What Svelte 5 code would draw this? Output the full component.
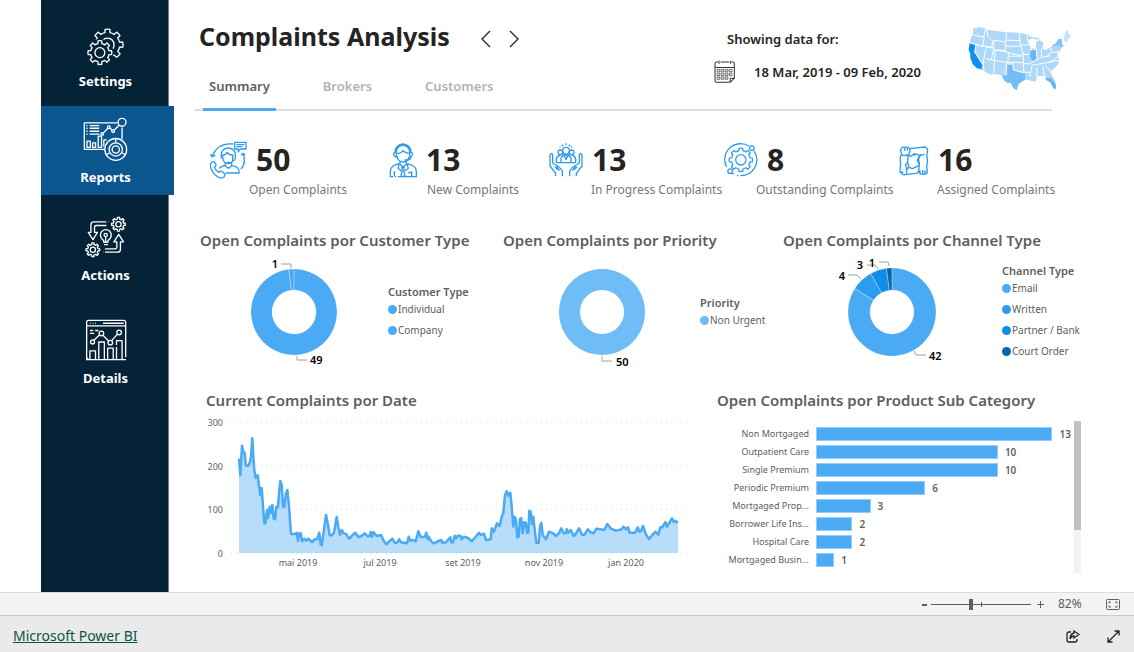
<script>
  const TAU = Math.PI * 2;

  // Outline of a cog wheel with rounded-off rectangular teeth.
  function gear(cx, cy, outer, teeth, depth) {
    const root = outer - depth;
    const step = TAU / teeth;
    const at = (r, a) => `${(cx + r * Math.sin(a)).toFixed(1)},${(cy - r * Math.cos(a)).toFixed(1)}`;
    let d = '';
    for (let i = 0; i < teeth; i++) {
      const a = i * step;
      d += `${i ? 'L' : 'M'}${at(root, a - step * 0.27)}`;
      d += `L${at(outer, a - step * 0.2)}A${outer} ${outer} 0 0 1 ${at(outer, a + step * 0.2)}`;
      d += `L${at(root, a + step * 0.27)}A${root} ${root} 0 0 1 ${at(root, a + step * 0.73)}`;
    }
    return d + 'Z';
  }

  function ringSlice(cx, cy, r, inner, from, to) {
    const a = from * TAU;
    const b = to * TAU;
    const big = to - from > 0.5 ? 1 : 0;
    const at = (rad, t) => `${cx + rad * Math.sin(t)} ${cy - rad * Math.cos(t)}`;
    return `M${at(r, a)}A${r} ${r} 0 ${big} 1 ${at(r, b)}L${at(inner, b)}A${inner} ${inner} 0 ${big} 0 ${at(inner, a)}Z`;
  }

  const nav = [
    { id: 'settings', label: 'Settings', box: '139 82 112 114', w: 37, h: 38 },
    { id: 'reports', label: 'Reports', box: '128 348 136 136', w: 45, h: 45 },
    { id: 'actions', label: 'Actions', box: '130 62 126 128', w: 42, h: 42 },
    { id: 'details', label: 'Details', box: '124 370 126 128', w: 42, h: 42 }
  ];
  let page = $state('reports');

  const tabs = ['Summary', 'Brokers', 'Customers'];
  let tab = $state('Summary');

  const kpis = [
    { id: 'open', value: 50, label: 'Open Complaints', box: '38 34 114 114', w: 38, h: 38 },
    { id: 'new', value: 13, label: 'New Complaints', box: '580 40 84 108', w: 28, h: 36 },
    { id: 'progress', value: 13, label: 'In Progress Complaints', box: '28 38 102 102', w: 34, h: 34 },
    { id: 'outstanding', value: 8, label: 'Outstanding Complaints', box: '28 36 105 105', w: 34, h: 34 },
    { id: 'assigned', value: 16, label: 'Assigned Complaints', box: '554 42 90 93', w: 30, h: 31 }
  ];

  const donuts = [
    {
      id: 'customer', title: 'Open Complaints por Customer Type', legend: 'Customer Type', r: 43,
      parts: [
        { name: 'Individual', value: 49, color: '#4aabf4' },
        { name: 'Company', value: 1, color: '#4aabf4' }
      ],
      leaders: ['M47 7h10v4', 'M63 99v4h10'],
      marks: [{ t: '1', x: 44, y: 11, a: 'end' }, { t: '49', x: 76, y: 107, a: 'start' }]
    },
    {
      id: 'priority', title: 'Open Complaints por Priority', legend: 'Priority', r: 43,
      parts: [{ name: 'Non Urgent', value: 50, color: '#6fbcf6' }],
      leaders: ['M60 99v5h10'],
      marks: [{ t: '50', x: 74, y: 109, a: 'start' }]
    },
    {
      id: 'channel', title: 'Open Complaints por Channel Type', legend: 'Channel Type', r: 44,
      parts: [
        { name: 'Email', value: 42, color: '#4aabf4' },
        { name: 'Written', value: 4, color: '#2b9df0' },
        { name: 'Partner / Bank', value: 3, color: '#118de8' },
        { name: 'Court Order', value: 1, color: '#0a66aa' }
      ],
      leaders: ['M16 18h9l4 4', 'M35 8h8l3 4', 'M47 5h9l1 4', 'M82 94l2 4h10'],
      marks: [
        { t: '4', x: 13, y: 23, a: 'end' },
        { t: '3', x: 31, y: 12, a: 'end' },
        { t: '1', x: 43, y: 10, a: 'end' },
        { t: '42', x: 97, y: 103, a: 'start' }
      ]
    }
  ];

  function slices(d) {
    const total = d.parts.reduce((s, p) => s + p.value, 0);
    let run = 0;
    return d.parts.map((p) => {
      const from = run / total;
      run += p.value;
      return { color: p.color, d: ringSlice(60, 55, d.r, 22, from, Math.min(run / total, 0.99999)) };
    });
  }

  // Samples as "x,y" on a plot with three units to the pixel.
  const samples =
    '132,205 136,256 141,167 145,186 149,188 152,226 160,228 165,216 168,200 172,145 175,200 178,240 182,264 188,256 191,280 196,315 200,294 204,350 208,400 211,400 216,360 219,384 224,350 228,368 232,345 236,385 240,388 244,350 249,352 252,310 256,273 260,284 264,350 268,352 272,315 277,300 282,350 288,432 300,432 305,428 309,452 313,430 317,430 321,454 328,446 334,452 340,446 351,456 360,448 366,448 373,428 377,464 380,466 386,425 393,375 398,400 404,436 410,436 417,428 425,381 430,410 435,434 440,420 446,430 453,432 463,446 472,436 481,428 490,441 500,438 509,430 517,438 524,438 527,426 531,440 535,426 545,438 558,435 566,452 574,463 582,455 592,446 600,459 606,458 612,448 618,457 636,460 641,440 647,452 655,450 662,454 670,424 678,442 690,440 694,428 698,448 701,440 710,456 717,460 728,454 739,450 742,458 753,457 766,442 769,457 774,457 779,437 783,445 788,437 796,437 800,448 806,440 818,443 830,454 842,440 852,428 858,435 867,431 873,450 887,448 890,415 897,425 906,400 914,408 920,380 925,370 930,315 935,304 940,317 946,308 950,350 955,410 959,380 963,390 967,442 971,440 975,386 979,385 983,430 988,397 992,398 997,430 1000,428 1003,362 1007,366 1011,403 1015,380 1020,425 1024,458 1031,458 1035,410 1039,398 1043,435 1053,448 1062,425 1075,430 1082,438 1092,430 1099,415 1106,430 1112,430 1115,418 1120,428 1127,420 1136,438 1142,432 1152,415 1162,435 1168,434 1179,418 1187,427 1196,430 1204,416 1216,418 1228,420 1237,402 1248,416 1262,422 1280,418 1285,410 1294,418 1299,412 1304,428 1320,428 1328,412 1333,425 1338,423 1344,408 1352,432 1362,447 1372,435 1382,425 1390,434 1396,412 1402,412 1411,396 1416,410 1422,400 1431,385 1437,397 1441,392 1449,398';
  const line = samples
    .split(' ')
    .map((s) => s.split(',').map(Number))
    .map(([x, y]) => `${(x / 3 - 11).toFixed(1)},${(y / 3 - 22).toFixed(1)}`)
    .join(' ');
  const area = `33,141 ${line} 472,141`;

  const yAxis = [[300, 10], [200, 54], [100, 97], [0, 141]];
  const xAxis = [['mai 2019', 92], ['jul 2019', 174], ['set 2019', 257], ['nov 2019', 338], ['jan 2020', 420]];

  const bars = [
    ['Non Mortgaged', 13],
    ['Outpatient Care', 10],
    ['Single Premium', 10],
    ['Periodic Premium', 6],
    ['Mortgaged Prop...', 3],
    ['Borrower Life Ins...', 2],
    ['Hospital Care', 2],
    ['Mortgaged Busin...', 1]
  ];

  let zoom = $state(82);
</script>

{#snippet navIcon(id)}
  {#if id === 'settings'}
    <path d={gear(201, 132, 47, 8, 10)} />
    <circle cx="201" cy="132" r="20" />
    <circle class="cover" cx="178" cy="156" r="41" />
    <path d={gear(178, 156, 36, 8, 8)} />
    <circle cx="178" cy="156" r="15" />
  {:else if id === 'reports'}
    <path d="M232 366H132v80h62M246 380v35" />
    <circle cx="246" cy="364" r="12" />
    <path d="M138 374h4M138 382h4M138 391h4M138 400h4M148 374h29M148 382h29M148 391h29M148 400h29" />
    <path d="M190 396l13-14M210 381l6 8M222 388l15-15" />
    <circle cx="186" cy="399" r="4" /><circle cx="206" cy="379" r="4" /><circle cx="219" cy="391" r="4" />
    <path d="M140 440v-19h10v19zM157 440v-14h9v14zM174 440v-34h10v34zM191 438v-21h9" />
    <circle cx="227" cy="446" r="32" class="cover" />
    <circle cx="227" cy="446" r="33" /><circle cx="227" cy="446" r="20" /><circle cx="227" cy="446" r="11" />
    <path d="M227 413v13M198 462l11-6M256 462l-11-6" />
  {:else if id === 'actions'}
    <path d={gear(231, 87, 21, 8, 5)} /><circle cx="231" cy="87" r="8" />
    <path d={gear(153, 165, 21, 8, 5)} /><circle cx="153" cy="165" r="8" />
    <path d="M194 80h-38q-9 0-9 9v23h-8l14 22 14-22h-9V96q0-5 5-5h31M199 80h1" />
    <path d="M190 172h38q9 0 9-9v-22h9l-14-23-15 23h9v16q0 5-5 5h-31M184 172h1" />
    <path d="M186 142v-5q-10-7-10-17a16 16 0 0 1 33 0q0 10-10 17v5zM187 149h12M192 141v-16" />
    <circle cx="192" cy="120" r="5" />
  {:else}
    <path d="M133 490h-5V380q0-6 6-6h107q6 0 6 6v106M128 391h119M138 383h2M146 383h2M154 383h2M178 383h63" />
    <path d="M126 494h122M138 405h10M154 405h10M138 414h13" />
    <circle cx="146" cy="440" r="6" /><circle cx="173" cy="414" r="7" /><circle cx="200" cy="442" r="7" /><circle cx="227" cy="411" r="7" />
    <path d="M150 435l17-16M178 420l17 17M204 436l18-20" />
    <path d="M138 493v-26h17v26M165 493v-53h17v53M192 493v-34h17v34M219 493v-38M219 449v-13h17v57" />
  {/if}
{/snippet}

{#snippet kpiIcon(id)}
  {#if id === 'open'}
    <path d="M110 43Q66 38 47 80M42 73l5 9 10-6M140 72Q151 98 134 118M134 77l6-6 6 6" />
    <path d="M115 38h34v20h-17l-6 9v-9h-11zM120 45h24M120 51h18" />
    <path d="M75 86V74a21 19 0 0 1 42 0v12q-2 7-8 7V76q-12 0-16-8-6 9-18 10M79 80v4q2 17 16 18 12-1 15-10M92 98h10M87 101v8l9 7 10-7v-8" />
    <path d="M87 107q-14 3-18 9M106 107q20 4 22 15v8H88" />
    <path d="M42 104q4-10 11-8l6 8q1 5-5 9 4 10 14 15 6-5 10-2l8 8q1 7-8 11-8 2-22-10-14-14-14-31z" />
  {:else if id === 'new'}
    <path d="M598 70a24 24 0 0 1 48 0M602 70a20 20 0 0 1 40 0M598 70q-4 1-4 7t5 8h3V70zM646 70q4 1 4 7t-5 8h-3V70zM646 86q-2 8-12 8h-8" />
    <path d="M602 75q14 0 20-9 7 8 20 8M604 82q3 17 18 18 15-1 18-15M613 98v9l9 8 10-8v-9" />
    <path d="M613 105q-28 4-29 22v17h9M598 144h4M607 144h55v-17q-1-18-30-22M596 128v15M648 128v15M610 107l-3 12 10 8M634 107l4 12-10 8M618 116h8l-2 7 4 20h-12l4-20zM637 132h12" />
  {:else if id === 'progress'}
    <path d="M79 39v6M67 43l4 5M91 43l-4 5M60 50h3M97 50h-3" />
    <circle cx="79" cy="61" r="10" /><circle cx="62" cy="66" r="7" /><circle cx="96" cy="66" r="7" />
    <path d="M64 97V85q2-11 15-11t15 11v12M73 75l6 12 6-12M50 97V86q2-10 13-12M108 97V86q-2-10-13-12M50 97h58M68 72l6 4M84 76l6-4" />
    <path d="M31 73q4-7 8 0v25l10 6q13 6 19 18v16M31 73v34l17 22v8M50 108l9 11q-8-2-14-10M127 73q-4-7-8 0v25l-10 6q-13 6-19 18v16M127 73v34l-17 22v8M108 108l-9 11q8-2 14-10" />
  {:else if id === 'outstanding'}
    <circle cx="80" cy="88" r="16" />
    <path d={gear(80, 88, 36, 8, 7)} />
    <path d="M106 46A49 49 0 0 0 36 110M53 129A49 49 0 0 0 58 132M68 136h4M78 137A49 49 0 0 0 121 61" />
    <circle cx="114" cy="52" r="7" /><circle cx="47" cy="123" r="7" />
  {:else}
    <path d="M561 66q-5-12 2-15 3-5 8-1 4-5 8 0 5-2 7 3l46-5 8 7-3 20M561 66l5 8 15-2M571 50v9M579 50v9" />
    <path d="M586 53q3 13-5 19l7 4 13-8 18 6 12-5M561 70q-6 14-2 28l-2 25 6 6M581 73l-1 21-7 8 5 12-2 14" />
    <path d="M637 73q5 16 0 30l2 20q-2 7-7 5-4 5-7 0-5 4-8-1-4-2-4-7l2-20-6-12 7-12 4-7M632 128v-10M625 128v-10M617 127v-9" />
    <path d="M563 129q6 4 14 1l30-3 7-8M574 116l10-7 11 4 17-9M580 94l4 15M612 76l3 24M601 68l-1 7M560 123l7 1" />
  {/if}
{/snippet}

<div class="app">
  <div class="report">
    <nav class="side">
      {#each nav as n}
        <button class="nav {n.id}" class:active={page === n.id} onclick={() => (page = n.id)}>
          <svg width={n.w} height={n.h} viewBox={n.box} aria-hidden="true">{@render navIcon(n.id)}</svg>
          <span>{n.label}</span>
        </button>
      {/each}
    </nav>

    <main>
      <header>
        <div class="heading">
          <div class="title-row">
            <h1>Complaints Analysis</h1>
            <button class="arrow" aria-label="Previous"><svg width="10" height="18" viewBox="0 0 10 18"><path d="M9 1L1 9l8 8" /></svg></button>
            <button class="arrow" aria-label="Next"><svg width="10" height="18" viewBox="0 0 10 18"><path d="M1 1l8 8-8 8" /></svg></button>
          </div>
          <div class="tabs" role="tablist">
            {#each tabs as t}
              <button role="tab" aria-selected={tab === t} class:on={tab === t} onclick={() => (tab = t)}>{t}</button>
            {/each}
          </div>
        </div>
        <div class="period">
          <div class="dates">
            <p class="hint">Showing data for:</p>
            <p class="range">
              <svg class="cal" width="21" height="23" viewBox="63 181 62 68" aria-hidden="true">
                <path d="M75 187h-4q-5 0-5 5v50q0 5 5 5h40l12-12v-43q0-5-5-5h-3M82 187h26M66 203h57M78 183v9M112 183v9M111 247v-12h12" />
                <path d="M72 209h8v7h-8zM84 209h8v7h-8zM96 209h8v7h-8zM108 209h8v7h-8zM72 220h8v7h-8zM84 220h8v7h-8zM96 220h8v7h-8zM108 220h8v7h-8zM72 231h8v7h-8zM84 231h8v7h-8zM96 231h8v7h-8z" stroke-width="2" />
              </svg>
              18 Mar, 2019 - 09 Feb, 2020
            </p>
          </div>
          <svg class="map" width="105" height="67" viewBox="833 73 316 200" role="img" aria-label="United States">
            <path fill="#aed8fa" d="M853 80L862 84 864 78 888 82 897 87 952 94 992 96 1018 101 1021 106 1037 111 1020 118 1018 128 1024 140 1040 143 1041 122 1052 118 1064 126 1060 142 1072 146 1086 138 1092 132 1104 128 1110 114 1117 113 1120 130 1127 134 1118 141 1112 152 1104 160 1110 176 1108 190 1094 204 1084 214 1090 226 1098 240 1102 256 1099 265 1092 258 1082 236 1070 231 1052 228 1044 230 1040 242 1014 238 1008 236 990 248 983 268 972 258 960 238 946 238 934 222 912 220 904 222 882 210 864 203 846 178 838 146 842 118 850 100z" />
            <path fill="#c3e2fb" d="M1124 118l3-18 5-12 6 4 3 10 7 3-9 8-8 14z" />
            <path fill="#1290ee" d="M841 127l18 5-3 22 23 39-2 11-13-1-14-13-7-19 0-12-5-12z" />
            <path fill="#74bdf7" d="M954 191l18 1v16l20 7 15 1 1 21-17 10-8 11 1 10-10-4-10-17-10-1-8-5-7-12 4-5h11z" />
            <path fill="#64b6f6" d="M1026 148l14-2 1 24-5 12-8-4-6-14zM1070 231l14 1 7 6 10 17-1 11-8-5-8-16-14-8z" />
            <path fill="#7fc3f8" d="M1090 133l10-6 8-13 9 0 2 17-1 9-8-4-4-4-16 4z" />
            <g fill="none" stroke="#fff" stroke-width="3">
              <path d="M851 102l32 7 7-27M885 109l-5 28-40-12M893 84l3 24 8 8 6 4-2 19-28-4M860 132l-4 22 24 34 6-4M892 139l-10 40 2 32M893 139l22 3M888 174l28 4M912 148l-6 30M912 143l4-25M912 118l38 5M952 94l-4 56-36-4M918 148l-5 72M952 118l40 1M948 136h44M950 152l-32-4M958 153l-2 31-42-5M945 152l50 13M958 166h40M958 184l42 1M952 184l-2 38M954 189h18v18l34 9M990 96l4 36 8 28 2 56M994 133l24-2M998 160l24 1M1002 188l22 1M1014 101l2 20 10 14 0 12M1022 146l22-2M1042 145l2 26M1057 146v22M1024 187l14-8 20-10 24-4M1028 193l52-8 28-18M1028 195l-6 33M1044 200l-1 30M1061 198l5 32M1006 214l16 1M1068 196l20 16M1042 227l28 0M1058 143l24-6 6 18 22-2M1084 155l-10 14M1078 184l32-6" />
              <path d="M1021 118l20-7 12-2 9 4-8 5M1066 147l12-9 11-4" stroke-width="4" />
            </g>
            <path fill="#c3e2fb" d="M1030 112l10-4 8 3 8 2-12 5z" />
            <path fill="#d5ebfc" d="M933 264l4 2-1 4-3-2z" />
          </svg>
        </div>
      </header>

      <section class="kpis">
        {#each kpis as k}
          <article class="kpi {k.id}">
            <div class="kpi-top">
              <svg width={k.w} height={k.h} viewBox={k.box} aria-hidden="true">{@render kpiIcon(k.id)}</svg>
              <strong>{k.value}</strong>
            </div>
            <p>{k.label}</p>
          </article>
        {/each}
      </section>

      <section class="donuts">
        {#each donuts as d}
          <article class={d.id}>
            <h2>{d.title}</h2>
            <div class="donut">
              <svg width="120" height="112" viewBox="0 0 120 112" role="img" aria-label={d.title}>
                {#each slices(d) as s}
                  <path d={s.d} fill={s.color} />
                {/each}
                {#if d.parts.length > 1}
                  {#each slices(d) as s}
                    <path d={s.d} class="edge" />
                  {/each}
                {/if}
                {#each d.leaders as l}<path d={l} class="leader" />{/each}
                {#each d.marks as m}<text x={m.x} y={m.y} text-anchor={m.a}>{m.t}</text>{/each}
              </svg>
              <div class="legend">
                <h3>{d.legend}</h3>
                <ul>
                  {#each d.parts as p}
                    <li><svg width="9" height="9" viewBox="0 0 9 9"><circle cx="4.5" cy="4.5" r="4.5" fill={p.color} /></svg>{p.name}</li>
                  {/each}
                </ul>
              </div>
            </div>
          </article>
        {/each}
      </section>

      <section class="bottom">
        <article>
          <h2>Current Complaints por Date</h2>
          <svg class="trend" viewBox="0 0 484 160" role="img" aria-label="Current Complaints por Date">
            {#each yAxis as [v, y]}
              <line x1="25" x2="481" y1={y} y2={y} />
              <text x="17" y={y + 4} text-anchor="end">{v}</text>
            {/each}
            <polygon points={area} />
            <polyline points={line} />
            {#each xAxis as [t, x]}
              <text {x} y="154" text-anchor="middle">{t}</text>
            {/each}
          </svg>
        </article>
        <article>
          <h2>Open Complaints por Product Sub Category</h2>
          <div class="scroller">
            <ul class="bars">
              {#each bars as [name, v]}
                <li>
                  <span class="name">{name}</span>
                  <span class="track"><span class="bar" style="width: {v * 7.05}%"></span><b>{v}</b></span>
                </li>
              {/each}
            </ul>
            <div class="scroll"><div class="thumb"></div></div>
          </div>
        </article>
      </section>
    </main>
  </div>

  <div class="status">
    <button aria-label="Zoom out" onclick={() => (zoom -= 5)}><svg width="5" height="11" viewBox="0 0 5 11"><path d="M0 6h5" stroke-width="2" /></svg></button>
    <input type="range" min="10" max="190" aria-label="Zoom" bind:value={zoom} />
    <button aria-label="Zoom in" onclick={() => (zoom += 5)}><svg width="7" height="11" viewBox="0 0 7 11"><path d="M0 5.500h7M3.500 2v7" /></svg></button>
    <span class="pct">{zoom}%</span>
    <button aria-label="Fit to page">
      <svg width="14" height="11" viewBox="0 0 14 11"><rect x=".5" y=".5" width="13" height="10" rx="1" /><path d="M5 3H3v1.500M3 6.500V8h2M9 3h2v1.500M11 6.500V8H9" /></svg>
    </button>
  </div>

  <footer>
    <a href="#powerbi">Microsoft Power BI</a>
    <button aria-label="Share">
      <svg width="14" height="13" viewBox="0 0 14 13"><path d="M5 2H3Q1 2 1 4v6q0 2 2 2h6q2 0 2-2V9M8 1l5 3.500L8 8V6Q5 6 4 9q0-5 4-6z" /></svg>
    </button>
    <button aria-label="Full screen">
      <svg width="13" height="13" viewBox="0 0 13 13"><path d="M1 12L12 1M7.500 1H12v4.500M1 7.500V12h4.500" /></svg>
    </button>
  </footer>
</div>

<style>
  :global(body) { margin: 0; }
  .app {
    display: flex;
    flex-direction: column;
    min-height: 100vh;
    background: #fff;
    color: #252423;
    font-family: 'Noto Sans', 'Open Sans', sans-serif;
  }
  h1, h2, h3, p, ul { margin: 0; padding: 0; }
  ul { list-style: none; }
  button { border: 0; padding: 0; background: none; font: inherit; color: inherit; cursor: pointer; }
  svg { display: block; flex: none; }

  .report { flex: 1; display: flex; padding-left: 41px; }
  .side {
    flex: none;
    box-sizing: border-box;
    width: 128px;
    background: #042337;
    border-right: 1px solid #72828d;
  }
  .nav {
    display: flex;
    flex-direction: column;
    align-items: center;
    justify-content: flex-end;
    box-sizing: border-box;
    width: 100%;
    padding-left: 2px;
    gap: 5px;
    color: #fff;
    font-size: 13px;
    font-weight: 700;
    line-height: 20px;
  }
  .nav svg { fill: none; stroke: #fff; stroke-width: 4; stroke-linejoin: round; }
  .nav .cover { fill: #042337; stroke: none; }
  .nav.settings { height: 106px; padding-bottom: 15px; }
  .nav.reports { height: 89px; padding-bottom: 8px; }
  .nav.actions { height: 90px; gap: 7px; }
  .nav.details { height: 103px; gap: 7px; }
  .nav.active { position: relative; width: calc(100% + 6px); padding-right: 6px; background: #0b568e; }
  .nav.active .cover { fill: #0b568e; }

  main { flex: 1; min-width: 0; padding: 0 53px 16px 26px; }

  header {
    display: flex;
    justify-content: space-between;
    position: relative;
    padding-right: 9px;
  }
  header::after {
    content: '';
    position: absolute;
    left: 0;
    right: 29px;
    bottom: 0;
    height: 2px;
    background: #dedede;
  }
  .title-row { display: flex; align-items: center; padding: 18px 0 0 4px; height: 36px; }
  h1 { margin-right: 31px; font-size: 25px; font-weight: 700; line-height: 36px; white-space: nowrap; }
  .arrow { margin: 6px 18px 0 0; }
  .arrow svg { fill: none; stroke: #333; stroke-width: 1.5; }
  .tabs { display: flex; gap: 41px; padding: 22px 0 0 8px; }
  .tabs button {
    position: relative;
    z-index: 1;
    padding: 0 6px 12px;
    border-bottom: 3px solid transparent;
    color: #b3b3b3;
    font-size: 13px;
    font-weight: 600;
    line-height: 20px;
  }
  .tabs .on { color: #605e5c; border-color: #4aabf4; }

  .period { display: flex; gap: 46px; padding-top: 25px; }
  .dates { font-size: 13px; font-weight: 600; line-height: 20px; white-space: nowrap; padding-top: 4px; }
  .hint { padding-left: 13px; }
  .range { display: flex; align-items: center; gap: 19px; margin-top: 11px; }
  .cal { fill: none; stroke: #333; stroke-width: 3; }

  .kpis { display: grid; grid-template-columns: 180fr 160fr 175fr 175fr 182fr; padding: 30px 0 0 14px; }
  .kpi { min-width: 0; }
  .kpi-top { display: flex; align-items: center; gap: 9px; height: 38px; }
  .kpi svg { fill: none; stroke: #2f9bea; stroke-width: 4; stroke-linejoin: round; }
  .kpi strong { font-size: 30px; font-weight: 700; line-height: 38px; }
  .kpi p { padding: 1px 0 0 38px; color: #777; font-size: 12px; line-height: 20px; white-space: nowrap; }
  .kpi.open p { padding-left: 40px; }
  .kpi.progress p { padding-left: 42px; }
  .kpi.outstanding p { padding-left: 32px; }

  h2 { color: #605e5c; font-size: 15px; font-weight: 600; line-height: 20px; white-space: nowrap; }
  .donuts { display: grid; grid-template-columns: 303fr 280fr 298fr; padding: 30px 0 0 5px; }
  .donuts article { min-width: 0; }
  .donut { display: flex; align-items: center; gap: 34px; padding: 7px 0 0 34px; }
  .priority .donut { gap: 38px; padding-left: 39px; }
  .channel .donut { gap: 50px; padding-left: 49px; }
  .donut svg { overflow: visible; }
  .donut .edge { fill: none; stroke: #fff; stroke-opacity: 0.35; stroke-width: 0.6; }
  .donut .leader { fill: none; stroke: #a0a0a0; }
  .donut text { font-size: 11px; font-weight: 600; fill: #000; }
  .legend { color: #605e5c; white-space: nowrap; }
  h3 { font-size: 11px; font-weight: 600; line-height: 14px; }
  .legend li { display: flex; align-items: center; gap: 1px; font-size: 10px; line-height: 21px; }

  .bottom { display: grid; grid-template-columns: 484fr 364fr; gap: 27px; padding: 21px 0 0 11px; }
  .bottom article { min-width: 0; }
  .trend { width: 100%; margin-top: 2px; }
  .trend line { stroke: #d8d8d8; stroke-dasharray: 1 4; }
  .trend polygon { fill: #4aabf4; fill-opacity: 0.4; }
  .trend polyline { fill: none; stroke: #4aabf4; stroke-width: 2.5; stroke-linejoin: round; }
  .trend text { font-size: 9px; fill: #605e5c; }
  .scroller { display: flex; margin-top: 11px; }
  .bars { flex: 1; padding: 4px 0; }
  .bars li { display: flex; align-items: center; gap: 7px; height: 18px; color: #605e5c; font-size: 9px; line-height: 18px; }
  .name { width: 92px; flex: none; text-align: right; white-space: nowrap; }
  .track { flex: 1; display: flex; align-items: center; gap: 7px; }
  .bar { box-sizing: border-box; height: 14px; background: #4aabf4; border: 1px solid #94cdf8; flex: none; }
  .track b { font-size: 10px; font-weight: 600; }
  .scroll { width: 7px; background: #f3f3f3; }
  .thumb { height: 72%; background: #c2c2c2; }

  .status {
    display: flex;
    align-items: center;
    justify-content: flex-end;
    box-sizing: border-box;
    height: 23px;
    padding-right: 14px;
    background: #f4f4f4;
    border-top: 1px solid #dcdcdc;
    color: #605e5c;
  }
  .status svg { fill: none; stroke: #605e5c; }
  input {
    appearance: none;
    width: 100px;
    height: 12px;
    margin: 0 6px 0 4px;
    background:
      linear-gradient(#605e5c, #605e5c) 50% 50% / 1px 5px no-repeat,
      linear-gradient(#605e5c, #605e5c) 0 50% / 100% 1px no-repeat;
  }
  input::-webkit-slider-thumb { appearance: none; width: 4px; height: 11px; background: #605e5c; }
  .pct { width: 24px; margin: 0 24px 0 14px; font-size: 12px; line-height: 20px; }

  footer {
    display: flex;
    align-items: center;
    gap: 27px;
    box-sizing: border-box;
    height: 37px;
    padding: 4px 14px 0 13px;
    background: #eaeaea;
    border-top: 1px solid #c8c8c8;
  }
  footer a { margin-right: auto; color: #0b5548; font-size: 14px; line-height: 20px; }
  footer svg { fill: none; stroke: #222; stroke-width: 1.3; }
</style>
